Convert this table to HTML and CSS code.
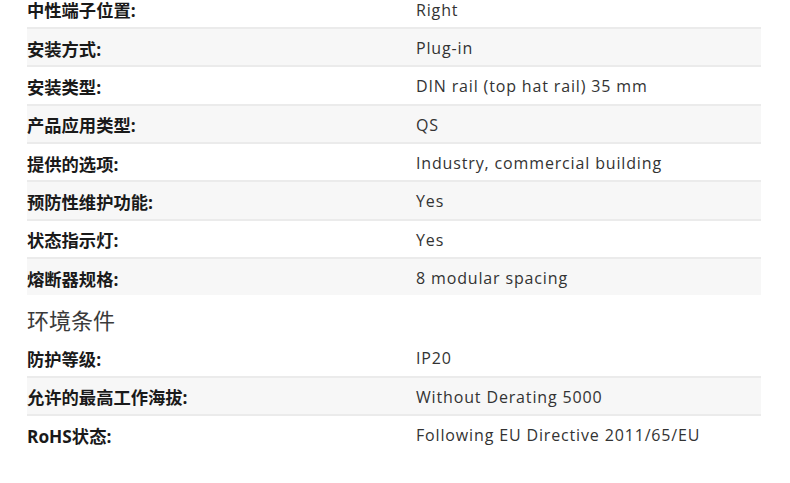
FILE: index.html
```html
<!DOCTYPE html>
<html lang="zh">
<head>
<meta charset="utf-8">
<link rel="stylesheet" href="styles.css">
</head>
<body>
<div class="page">
  <div class="specs">
    <div class="row"><div class="label">中性端子位置:</div><div class="value">Right</div></div>
    <div class="row alt"><div class="label">安装方式:</div><div class="value">Plug-in</div></div>
    <div class="row"><div class="label">安装类型:</div><div class="value">DIN rail (top hat rail) 35 mm</div></div>
    <div class="row alt"><div class="label">产品应用类型:</div><div class="value">QS</div></div>
    <div class="row"><div class="label">提供的选项:</div><div class="value">Industry, commercial building</div></div>
    <div class="row alt"><div class="label">预防性维护功能:</div><div class="value">Yes</div></div>
    <div class="row"><div class="label">状态指示灯:</div><div class="value">Yes</div></div>
    <div class="row alt"><div class="label">熔断器规格:</div><div class="value">8 modular spacing</div></div>
  </div>
  <h2 class="section">环境条件</h2>
  <div class="specs">
    <div class="row"><div class="label">防护等级:</div><div class="value">IP20</div></div>
    <div class="row alt"><div class="label">允许的最高工作海拔:</div><div class="value">Without Derating 5000</div></div>
    <div class="row"><div class="label">RoHS状态:</div><div class="value">Following EU Directive 2011/65/EU</div></div>
  </div>
</div>
</body>
</html>
```
FILE: styles.css
```css
html, body {
  margin: 0;
  padding: 0;
  background: #ffffff;
}
.page {
  width: 734px;
  margin: -9.33px 0 0 27px;
}
.specs {
  display: flex;
  flex-direction: column;
}
.row {
  display: grid;
  grid-template-columns: 389px 1fr;
  align-items: center;
  box-sizing: content-box;
  height: 34.33px;
  padding-top: 2px;
  border-top: 2px solid #ebebeb;
}
.row:first-child {
  border-top: none;
}
.row.alt {
  background: #f7f7f7;
}
.label {
  font-family: "Open Sans", "Noto Sans CJK SC", sans-serif;
  font-weight: 700;
  font-size: 17.3px;
  color: #1a1a1a;
}
.value {
  font-family: "Open Sans", "Noto Sans CJK SC", sans-serif;
  font-size: 16px;
  letter-spacing: 0.85px;
  color: #333333;
}
.section {
  margin: 0;
  height: 40px;
  padding-top: 4px;
  display: flex;
  align-items: center;
  font-family: "Noto Sans CJK SC", sans-serif;
  font-weight: 400;
  font-size: 22px;
  color: #3a3a3a;
}
```
